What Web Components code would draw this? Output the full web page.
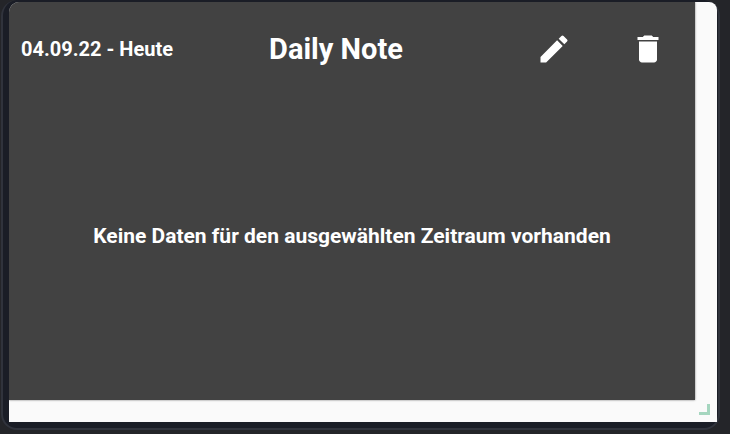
<!DOCTYPE html>
<html lang="de">
<head>
<meta charset="utf-8">
<title>Daily Note</title>
<style>
html, body { height: 100%; }
body { margin: 0; background: #242529; color: #fff; font-family: Roboto, "Liberation Sans", sans-serif; overflow: hidden; }
</style>
</head>
<body>
<dashboard-frame>
  <note-card>
    <note-header slot="header">
      <span slot="range">04.09.22 - Heute</span>
      <span slot="title">Daily Note</span>
      <icon-button slot="actions" label="Bearbeiten" icon="edit"></icon-button>
      <icon-button slot="actions" label="Löschen" icon="delete"></icon-button>
    </note-header>
    Keine Daten für den ausgewählten Zeitraum vorhanden
  </note-card>
</dashboard-frame>
<script>
class DashboardFrame extends HTMLElement {
  constructor() {
    super();
    this.attachShadow({ mode: "open" }).innerHTML = `
      <style>
        :host { display: block; box-sizing: border-box; height: 100%; padding: 0 10px 4px 1px; }
        .frame { box-sizing: border-box; height: 100%; padding: 2px 1px 6px 6px; background: #1a1d26;
          border: 2px solid #30333c; border-top: 0; border-radius: 16px; }
        .panel { position: relative; box-sizing: border-box; height: 100%; padding: 0 22px 22px 0; background: #fafafa;
          border-radius: 10px 8px 0 0; overflow: hidden; }
        .handle { position: absolute; right: 7px; bottom: 7px; box-sizing: border-box; width: 11px; height: 11px;
          border: solid #a5d6bf; border-width: 0 3px 3px 0; }
      </style>
      <div class="frame"><div class="panel"><slot></slot><div class="handle"></div></div></div>`;
  }
}
class NoteCard extends HTMLElement {
  constructor() {
    super();
    this.attachShadow({ mode: "open" }).innerHTML = `
      <style>
        :host { display: flex; flex-direction: column; height: 100%; background: #424242; box-shadow: 0 0 2px #0008; }
        .message { flex: 1; display: flex; align-items: center; justify-content: center; margin: 0; padding: 0 12px 24px;
          font-size: 21px; line-height: 24px; font-weight: 700; text-align: center; }
      </style>
      <slot name="header"></slot>
      <p class="message"><slot></slot></p>`;
  }
}
class NoteHeader extends HTMLElement {
  constructor() {
    super();
    this.attachShadow({ mode: "open" }).innerHTML = `
      <style>
        :host { display: grid; grid-template-columns: 187fr 280fr 219fr; align-items: center; height: 94px; font-weight: 700; white-space: nowrap; }
        .range { padding-left: 12px; font-size: 20px; line-height: 24px; }
        h1 { margin: 0; font-size: 29px; line-height: 36px; font-weight: 700; text-align: center; }
        .actions { display: flex; justify-content: flex-end; }
      </style>
      <div class="range"><slot name="range"></slot></div>
      <h1><slot name="title"></slot></h1>
      <div class="actions"><slot name="actions"></slot></div>`;
  }
}
const ICONS = {
  edit: "M3 17.25V21h3.75L17.81 9.94l-3.75-3.75L3 17.25zM20.71 7.04a1 1 0 0 0 0-1.41l-2.34-2.34a1 1 0 0 0-1.41 0l-1.83 1.83 3.75 3.75 1.83-1.83z",
  delete: "M6 19c0 1.1.9 2 2 2h8c1.1 0 2-.9 2-2V7H6v12zM19 4h-3.5l-1-1h-5l-1 1H5v2h14V4z"
};
class IconButton extends HTMLElement {
  connectedCallback() {
    this.attachShadow({ mode: "open" }).innerHTML = `
      <style>
        :host { display: flex; justify-content: center; width: 94px; }
        button { display: flex; padding: 6px; border: 0; background: none; color: inherit; cursor: pointer; }
        svg { width: 36px; height: 36px; fill: currentColor; }
      </style>
      <button type="button" aria-label="${this.getAttribute("label")}">
        <svg viewBox="0 0 24 24" aria-hidden="true"><path d="${ICONS[this.getAttribute("icon")]}"/></svg>
      </button>`;
  }
}
customElements.define("dashboard-frame", DashboardFrame);
customElements.define("note-card", NoteCard);
customElements.define("note-header", NoteHeader);
customElements.define("icon-button", IconButton);
</script>
</body>
</html>
